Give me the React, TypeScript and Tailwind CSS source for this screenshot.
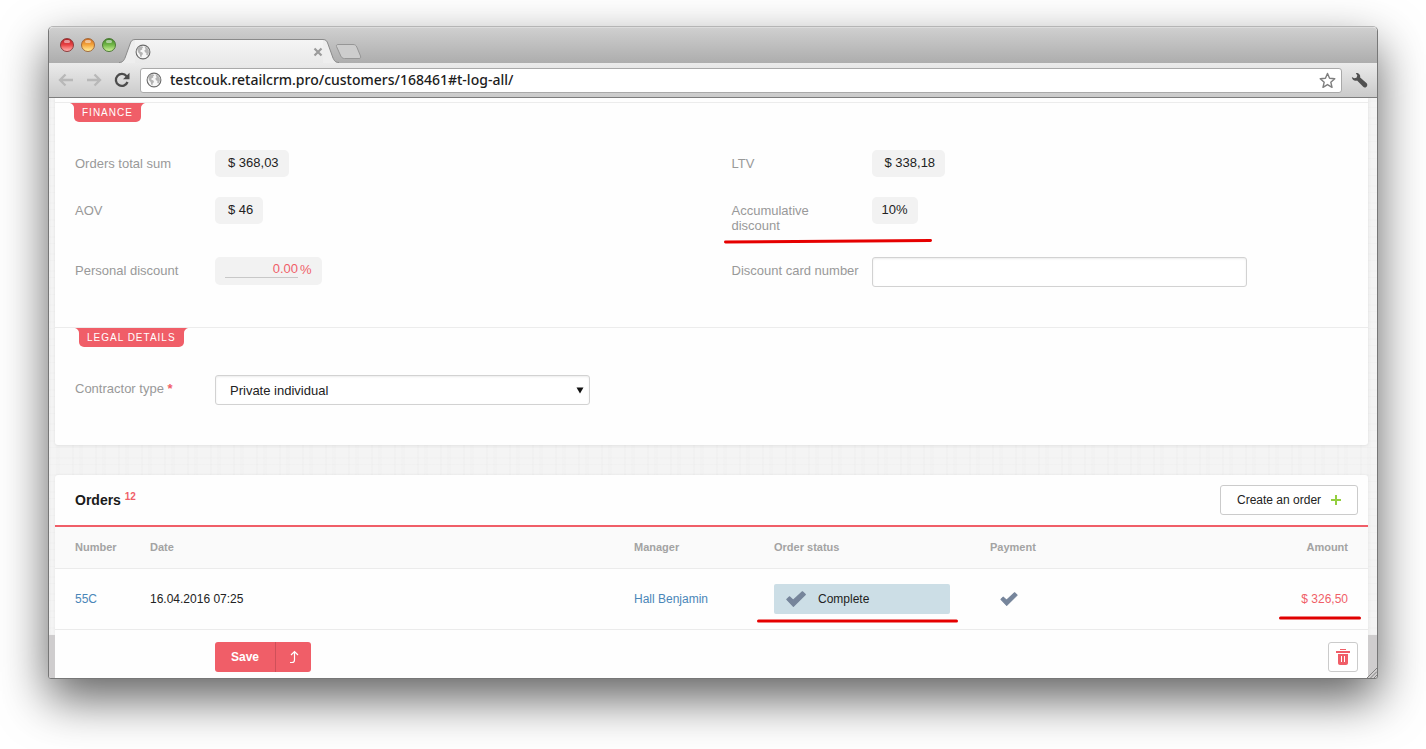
import type { ReactNode } from 'react';

interface Order {
  number: string;
  date: string;
  manager: string;
  status: string;
  amount: string;
}

const orders: Order[] = [
  {
    number: '55C',
    date: '16.04.2016 07:25',
    manager: 'Hall Benjamin',
    status: 'Complete',
    amount: '$ 326,50',
  },
];

function GlobeIcon() {
  return (
    <svg viewBox="0 0 16 16" className="size-4 shrink-0" aria-hidden="true">
      <circle cx="8" cy="8" r="6.9" fill="#f6f6f6" stroke="#6b6b6b" strokeWidth="1.1" />
      <path d="M2.2 5 4.2 2.8 7 2.2 8.3 3.2 7 4.4 7.3 5.4 5.6 6.3 5.2 7.6 7.4 8.4 8 9.9 6.8 11.3 6.4 13.4 5.2 12.6 4.7 10 3.2 8.4 2.6 6.4Z" fill="#b4b4b4" />
      <path d="M9.6 2.4 12 3.4 13.8 6 13.9 9 12.5 11.6 11.3 10.9 11.4 9.1 10 8.2 9.3 6.4 10.7 5.2 10 4Z" fill="#b4b4b4" />
    </svg>
  );
}

function CheckIcon({ className }: { className: string }) {
  return (
    <svg viewBox="0 0 20 16" className={className} aria-hidden="true">
      <path
        d="M0.8 8.4 3.4 5.8 7.2 9.2 16.4 0.8 19.3 3.5 7.4 15.3Z"
        fill="#76859b"
        stroke="#76859b"
        strokeWidth="1.2"
        strokeLinejoin="round"
      />
    </svg>
  );
}

function TrafficLight({ label, className }: { label: string; className: string }) {
  return (
    <button
      type="button"
      aria-label={label}
      className={`flex size-3.5 justify-center rounded-full border pt-px ${className}`}
    >
      <span className="h-[3px] w-1.5 rounded-full bg-white/50" />
    </button>
  );
}

function TabStrip() {
  return (
    <div className="flex h-9 items-start rounded-t-[4px] border-t border-[#dcdcdc] bg-linear-to-b from-[#cfcfcf] to-[#adadad] pl-[11px]">
      <div className="flex gap-[7px] pt-[10px]">
        <TrafficLight label="Close window" className="border-[#8d3a3a] bg-linear-to-b from-[#b82024] via-[#ea4346] to-[#ffb0b0]" />
        <TrafficLight label="Minimize window" className="border-[#a36a3a] bg-linear-to-b from-[#d06d22] via-[#f6a83e] to-[#fff09a]" />
        <TrafficLight label="Zoom window" className="border-[#4c7a35] bg-linear-to-b from-[#42852a] via-[#74b949] to-[#cdf299]" />
      </div>
      <div className="flex h-full items-end pl-[3px]">
        <svg viewBox="0 0 16 24" className="h-6 w-4" aria-hidden="true">
          <path d="M0 24C4 24 5 21 6 19L11 5C12 2 13 0.5 16 0.5V24Z" fill="#eee" />
          <path d="M0 23.5C4 23.5 5 21 6 19L11 5C12 2 13 0.5 16 0.5" fill="none" stroke="#8a8a8a" />
        </svg>
        <div className="flex h-6 w-[188px] items-center justify-between border-t border-[#8a8a8a] bg-linear-to-b from-[#f5f5f5] to-[#e9e9e9]">
          <GlobeIcon />
          <button type="button" aria-label="Close tab">
            <svg viewBox="0 0 10 10" className="size-2.5" aria-hidden="true">
              <path d="M1.5 1.5 8.5 8.5M8.5 1.5 1.5 8.5" stroke="#9b9b9b" strokeWidth="2.2" />
            </svg>
          </button>
        </div>
        <svg viewBox="0 0 16 24" className="h-6 w-4" aria-hidden="true">
          <path d="M16 24C12 24 11 21 10 19L5 5C4 2 3 0.5 0 0.5V24Z" fill="#eee" />
          <path d="M16 23.5C12 23.5 11 21 10 19L5 5C4 2 3 0.5 0 0.5" fill="none" stroke="#8a8a8a" />
        </svg>
        <button type="button" aria-label="New tab" className="mb-[3px] -ml-1">
          <svg viewBox="0 0 27 17" className="h-[17px] w-[27px]" aria-hidden="true">
            <path d="M3 1.5H18C20 1.5 21 2.3 21.8 4L25.5 13C26 14.7 25.5 15.5 24 15.5H9.5C7.5 15.5 6.5 14.5 5.8 13L1.5 3.5C1.2 2.3 1.6 1.5 3 1.5Z" fill="#cdcdcd" stroke="#969696" />
          </svg>
        </button>
      </div>
    </div>
  );
}

function Toolbar() {
  return (
    <div className="flex h-[35px] items-center border-b border-[#7e7e7e] bg-linear-to-b from-[#ebebeb] to-[#cacaca] px-[9px]">
      <div className="flex items-center gap-3">
        <button type="button" aria-label="Back">
          <svg viewBox="0 0 16 14" className="h-3.5 w-4" aria-hidden="true">
            <path d="M7.5 1.5 2 7l5.5 5.5M2.5 7H15" fill="none" stroke="#b8b8b8" strokeWidth="2.3" />
          </svg>
        </button>
        <button type="button" aria-label="Forward">
          <svg viewBox="0 0 16 14" className="h-3.5 w-4" aria-hidden="true">
            <path d="M8.5 1.5 14 7l-5.5 5.5M13.5 7H1" fill="none" stroke="#b8b8b8" strokeWidth="2.3" />
          </svg>
        </button>
        <button type="button" aria-label="Reload">
          <svg viewBox="0 0 16 16" className="size-4" aria-hidden="true">
            <path d="M12.6 4.2A6 6 0 1 0 13.5 10" fill="none" stroke="#4c4c4c" strokeWidth="2.3" />
            <path d="M15.5 0.8V7.2H9Z" fill="#4c4c4c" />
          </svg>
        </button>
      </div>
      <div className="ml-[10px] flex h-[25px] flex-1 items-center rounded-[3px] border border-[#a9a9a9] bg-white px-[5px]">
        <GlobeIcon />
        <input
          type="text"
          aria-label="Address"
          defaultValue="testcouk.retailcrm.pro/customers/168461#t-log-all/"
          className="ml-2 min-w-0 flex-1 font-['Noto_Sans',sans-serif] text-sm leading-5 font-medium text-[#1c1c1c] outline-none"
        />
        <button type="button" aria-label="Bookmark this page">
          <svg viewBox="0 0 18 18" className="size-[17px]" aria-hidden="true">
            <path d="M9 1.5 11.2 6.7 16.7 7.1 12.5 10.8 13.8 16.2 9 13.3 4.2 16.2 5.5 10.8 1.3 7.1 6.8 6.7Z" fill="#fff" stroke="#7f7f7f" strokeWidth="1.5" strokeLinejoin="round" />
          </svg>
        </button>
      </div>
      <button type="button" aria-label="Settings" className="ml-[9px]">
        <svg viewBox="0 0 18 18" className="size-[17px]" aria-hidden="true">
          <path d="M5.2 1.2C8 0.9 10.2 3 9.7 5.7L16.6 12C17.7 13.4 17.3 15 16.2 15.8 15 16.7 13.6 16.4 12.7 15.4L6.4 8.9C3.7 9.9 1 8 0.9 5.2L3.4 6.6 5.8 6 6.7 3.6Z" fill="#505050" />
        </svg>
      </button>
    </div>
  );
}

function SectionTag({ className, children }: { className: string; children: ReactNode }) {
  return (
    <h2 className={`relative w-fit rounded-b-[5px] bg-[#f05e68] px-2 text-[10px] leading-[19px] tracking-[1px] text-white uppercase ${className}`}>
      <svg viewBox="0 0 4 5" className="absolute top-0 -left-1 h-[5px] w-1" aria-hidden="true">
        <path d="M0 0H4V5C4 2.5 2.5 1 0 0Z" fill="#f05e68" />
      </svg>
      {children}
      <svg viewBox="0 0 4 5" className="absolute top-0 -right-1 h-[5px] w-1" aria-hidden="true">
        <path d="M4 0H0V5C0 2.5 1.5 1 4 0Z" fill="#f05e68" />
      </svg>
    </h2>
  );
}

interface FieldProps {
  label: ReactNode;
  htmlFor?: string;
  marked?: boolean;
  children: ReactNode;
}

function Field({ label, htmlFor, marked = false, children }: FieldProps) {
  const labelClass = 'w-[140px] shrink-0 pt-1.5 pr-3 pb-1 leading-[15px] text-[#999]';

  return (
    <div className="relative flex items-start px-5 text-[13px]">
      {htmlFor ? (
        <label htmlFor={htmlFor} className={labelClass}>{label}</label>
      ) : (
        <span className={labelClass}>{label}</span>
      )}
      {children}
      {marked && (
        <svg viewBox="0 0 208 6" className="absolute top-[41px] left-3 h-1.5 w-[208px]" aria-hidden="true">
          <path d="M1.5 4 206.5 2.5" stroke="#e60000" strokeWidth="3" strokeLinecap="round" />
        </svg>
      )}
    </div>
  );
}

function Pill({ money = false, children }: { money?: boolean; children: ReactNode }) {
  return (
    <span className={`rounded-[5px] bg-[#f2f2f2] pt-[3px] pr-2.5 pb-1 leading-5 text-[#222] ${money ? 'pl-[13px]' : 'pl-2.5'}`}>
      {children}
    </span>
  );
}

function CustomerCard() {
  return (
    <section className="rounded-b-[3px] bg-[#fefefe] pt-1 shadow-[0_1px_3px_rgba(0,0,0,0.08)]">
      <div className="border-t border-[#ececec]">
        <SectionTag className="ml-[19px]">Finance</SectionTag>
        <div className="grid grid-cols-2 gap-y-5 pt-7 pb-10">
          <Field label="Orders total sum">
            <Pill money>$ 368,03</Pill>
          </Field>
          <Field label="LTV">
            <Pill money>$ 338,18</Pill>
          </Field>
          <Field label="AOV">
            <Pill money>$ 46</Pill>
          </Field>
          <Field label="Accumulative discount" marked>
            <Pill>10%</Pill>
          </Field>
          <Field label="Personal discount" htmlFor="personal-discount">
            <span className="flex h-7 gap-0.5 rounded-[5px] bg-[#f2f2f2] px-2.5 pt-1 leading-[18px] text-[#f05e68]">
              <input
                id="personal-discount"
                type="text"
                defaultValue="0.00"
                className="h-[17px] w-[73px] border-b border-[#c8c8c8] text-right outline-none"
              />
              %
            </span>
          </Field>
          <Field label="Discount card number" htmlFor="discount-card">
            <input
              id="discount-card"
              type="text"
              className="h-[30px] w-[375px] rounded-[3px] border border-[#d2d2d2] bg-white px-3 shadow-[inset_0_1px_2px_rgba(0,0,0,0.08)] outline-none"
            />
          </Field>
        </div>
      </div>
      <div className="border-t border-[#ececec]">
        <SectionTag className="ml-6">Legal details</SectionTag>
        <div className="grid grid-cols-2 pt-7 pb-10">
          <Field
            htmlFor="contractor-type"
            label={<>Contractor type <span className="font-bold text-[#f05e68]">*</span></>}
          >
            <div className="relative">
              <select
                id="contractor-type"
                className="h-[30px] w-[375px] appearance-none rounded-[3px] border border-[#d2d2d2] bg-white pt-px pr-6 pl-[14px] text-[#222] shadow-[inset_0_1px_2px_rgba(0,0,0,0.08)] outline-none"
              >
                <option>Private individual</option>
              </select>
              <svg viewBox="0 0 8 7" className="pointer-events-none absolute top-3 right-1.5 h-[7px] w-2" aria-hidden="true">
                <path d="M0.5 0.5H7.5L4 6.5Z" fill="#111" />
              </svg>
            </div>
          </Field>
        </div>
      </div>
    </section>
  );
}

function OrdersCard() {
  return (
    <section className="mt-[30px] rounded-t-[3px] bg-[#fefefe] pb-[5px] shadow-[0_0_3px_rgba(0,0,0,0.06)]">
      <header className="flex h-[50px] items-center justify-between pr-2.5 pb-px pl-5">
        <h2 className="text-sm leading-5 font-bold text-[#1a1a1a]">
          Orders <sup className="text-[10px] text-[#f05e68]">12</sup>
        </h2>
        <button
          type="button"
          className="flex h-[30px] w-[138px] items-center justify-between rounded-[3px] border border-[#cbcbcb] bg-white px-4 text-xs text-[#222]"
        >
          Create an order
          <svg viewBox="0 0 10 10" className="size-2.5" aria-hidden="true">
            <path d="M5 0V10M0 5H10" stroke="#93cf3f" strokeWidth="2" />
          </svg>
        </button>
      </header>
      <table className="w-full table-fixed border-t-2 border-[#f05e68] text-left text-xs">
        <thead>
          <tr className="h-[42px] border-b border-[#ebebeb] bg-[#fafafa] text-[11px] text-[#a3a3a3]">
            <th className="w-[95px] pl-5">Number</th>
            <th>Date</th>
            <th className="w-[140px]">Manager</th>
            <th className="w-[216px]">Order status</th>
            <th className="w-[198px]">Payment</th>
            <th className="w-[180px] pr-5 text-right">Amount</th>
          </tr>
        </thead>
        <tbody>
          {orders.map((order) => (
            <tr key={order.number} className="h-[61px] border-b border-[#ebebeb]">
              <td className="pl-5">
                <a href="#order" className="text-[#4a86b8]">{order.number}</a>
              </td>
              <td className="text-[#222]">{order.date}</td>
              <td>
                <a href="#manager" className="text-[#4a86b8]">{order.manager}</a>
              </td>
              <td>
                <div className="relative flex h-[30px] w-44 items-center gap-3 rounded-[2px] bg-[#ccdee6] pl-3 text-[#222]">
                  <CheckIcon className="h-4 w-5" />
                  {order.status}
                  <svg viewBox="0 0 202 4" className="absolute top-[35px] -left-[17px] h-1 w-[202px]" aria-hidden="true">
                    <path d="M1.5 2H199.5" stroke="#e60000" strokeWidth="3" strokeLinecap="round" />
                  </svg>
                </div>
              </td>
              <td>
                <CheckIcon className="ml-2.5 h-3.5 w-[18px]" />
              </td>
              <td className="pr-5 text-right text-[#f05e68]">
                <span className="relative">
                  {order.amount}
                  <svg viewBox="0 0 83 4" className="absolute top-6 -right-[13px] h-1 w-[83px]" aria-hidden="true">
                    <path d="M2.5 2H81.5" stroke="#e00000" strokeWidth="3" strokeLinecap="round" />
                  </svg>
                </span>
              </td>
            </tr>
          ))}
        </tbody>
      </table>
    </section>
  );
}

function ActionBar() {
  return (
    <footer className="relative bg-[#cfcdce] pr-[9px] pl-1.5">
      <div className="flex justify-between bg-[#fefefe] pt-[7px] pr-2.5 pb-1.5 pl-40">
        <div className="flex h-[30px] overflow-hidden rounded-[3px] bg-[#f05e68] text-white">
          <button type="button" className="w-[60px] text-xs font-bold">Save</button>
          <button
            type="button"
            aria-label="Save and return"
            className="flex w-9 items-center justify-center border-l border-[#cf5059]"
          >
            <svg viewBox="0 0 10 14" className="h-3.5 w-2.5" aria-hidden="true">
              <path d="M1 12.5H3C4.8 12.5 5.5 11.5 5.5 10V1.5M2 5 5.5 1.5 9 5" fill="none" stroke="#fff" strokeWidth="1.2" />
            </svg>
          </button>
        </div>
        <button
          type="button"
          aria-label="Delete"
          className="flex size-[30px] items-center justify-center rounded-[3px] border border-[#cbcbcb] bg-white"
        >
          <svg viewBox="0 0 14 16" className="h-4 w-3.5" aria-hidden="true">
            <path d="M4 0H10V1H4ZM0 2H14V4H0ZM2 5H12V14C12 15.2 11.2 16 10 16H4C2.8 16 2 15.2 2 14ZM5 7V13H6V7ZM8 7V13H9V7Z" fill="#f05e68" fillRule="evenodd" />
          </svg>
        </button>
      </div>
      <svg viewBox="0 0 10 10" className="absolute right-0 bottom-0 size-2.5" aria-hidden="true">
        <path d="M0 10 10 0M3.5 10 10 3.5M7 10 10 7" stroke="#808080" />
      </svg>
    </footer>
  );
}

export default function App() {
  return (
    <div className="bg-white px-12 pt-[26px] pb-[70px] font-['Liberation_Sans',Arial,sans-serif]">
      <div className="overflow-hidden rounded-t-[5px] rounded-b-[3px] border border-[#777] border-t-[#b5b5b5] shadow-[0_20px_48px_rgba(0,0,0,0.62)]">
        <TabStrip />
        <Toolbar />
        <main className="bg-[#f4f4f4] bg-[repeating-linear-gradient(90deg,rgba(0,0,0,0.012)_0_2px,transparent_2px_7px,rgba(0,0,0,0.008)_7px_11px,transparent_11px_23px),repeating-linear-gradient(0deg,rgba(0,0,0,0.012)_0_1px,transparent_1px_6px,rgba(0,0,0,0.006)_6px_8px,transparent_8px_17px)] pr-[9px] pl-1.5">
          <CustomerCard />
          <OrdersCard />
        </main>
        <ActionBar />
      </div>
    </div>
  );
}
